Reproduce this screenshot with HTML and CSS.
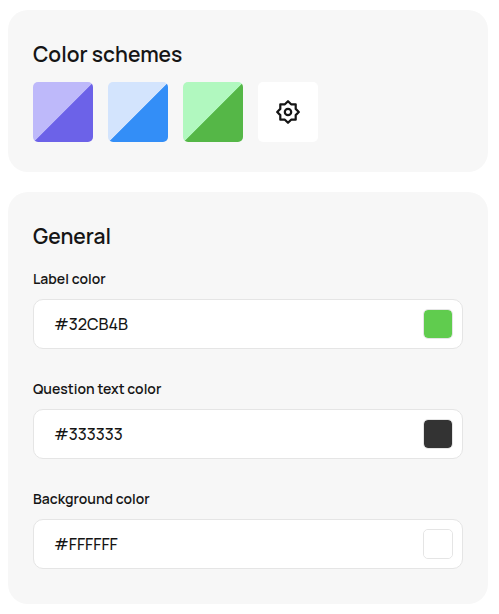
FILE: index.html
```
<!DOCTYPE html>
<html lang="en">
<head>
    <meta charset="UTF-8">
    <meta name="viewport" content="width=device-width, initial-scale=1.0">
    <title>Colors</title>
    <link rel="stylesheet" href="styles.css">
</head>
<body>
    <section class="card">
        <h2>Color schemes</h2>
        <div class="schemes">
            <button type="button" class="scheme purple" aria-label="Purple scheme"></button>
            <button type="button" class="scheme blue" aria-label="Blue scheme"></button>
            <button type="button" class="scheme green" aria-label="Green scheme"></button>
            <button type="button" class="scheme custom" aria-label="Custom scheme">
                <svg width="24" height="24" viewBox="0 0 24 24" fill="none" stroke="#151515" stroke-width="2.2" stroke-linejoin="round">
                    <path d="M12 1.2 L15.1 4.3 H19.7 V8.9 L22.8 12 L19.7 15.1 V19.7 H15.1 L12 22.8 L8.9 19.7 H4.3 V15.1 L1.2 12 L4.3 8.9 V4.3 H8.9 Z"/>
                    <circle cx="12" cy="12" r="3.2"/>
                </svg>
            </button>
        </div>
    </section>

    <section class="card general">
        <h2>General</h2>
        <div class="field">
            <label for="labelColor">Label color</label>
            <div class="box">
                <input type="text" id="labelColor" value="#32CB4B">
                <input type="color" value="#60cc4e" aria-label="Pick label color">
            </div>
        </div>
        <div class="field">
            <label for="questionColor">Question text color</label>
            <div class="box">
                <input type="text" id="questionColor" value="#333333">
                <input type="color" value="#333333" aria-label="Pick question text color">
            </div>
        </div>
        <div class="field">
            <label for="backgroundColor">Background color</label>
            <div class="box">
                <input type="text" id="backgroundColor" value="#FFFFFF">
                <input type="color" value="#ffffff" aria-label="Pick background color">
            </div>
        </div>
    </section>
</body>
</html>
```
FILE: styles.css
```
* { box-sizing: border-box; }
body { font-family: Manrope, Inter, sans-serif; color: #151515; background: #fff; margin: 0; padding: 10px 11px 10px 8px; }
.card { background: #f7f7f7; border-radius: 20px; padding: 29px 25px 30px; margin-bottom: 20px; }
.card:last-child { margin-bottom: 0; }
h2 { font-size: 21px; font-weight: 600; line-height: 30px; margin: 0 0 13px; }

.schemes { display: flex; flex-wrap: wrap; gap: 15px; }
.scheme { width: 60px; height: 60px; border: none; border-radius: 5px; padding: 0; cursor: pointer; }
.purple { background: linear-gradient(135deg, #beb9fa 50%, #6c62e8 51%); }
.blue { background: linear-gradient(135deg, #d3e4fd 50%, #338ef7 51%); }
.green { background: linear-gradient(135deg, #b1f8bf 50%, #55b747 51%); }
.custom { background: #fff; display: flex; align-items: center; justify-content: center; }

.general { padding-bottom: 35px; }
.general h2 { margin-bottom: 18px; }
.field { margin-bottom: 30px; }
.field:last-child { margin-bottom: 0; }
label { display: block; font-size: 14px; font-weight: 600; line-height: 20px; margin-bottom: 10px; }
.box { display: flex; align-items: center; height: 50px; padding: 0 9px 0 20px; background: #fff; border: 1px solid #e5e5e5; border-radius: 10px; }
input[type="text"] { flex: 1; min-width: 0; border: none; outline: none; padding: 0; background: none; font-family: inherit; font-size: 16px; font-weight: 500; color: #151515; }
input[type="color"] { appearance: none; width: 30px; height: 30px; padding: 0; border: 1px solid #e5e5e5; border-radius: 5px; background: none; overflow: hidden; cursor: pointer; }
input[type="color"]::-webkit-color-swatch-wrapper { padding: 0; }
input[type="color"]::-webkit-color-swatch { border: none; border-radius: 4px; }
```
